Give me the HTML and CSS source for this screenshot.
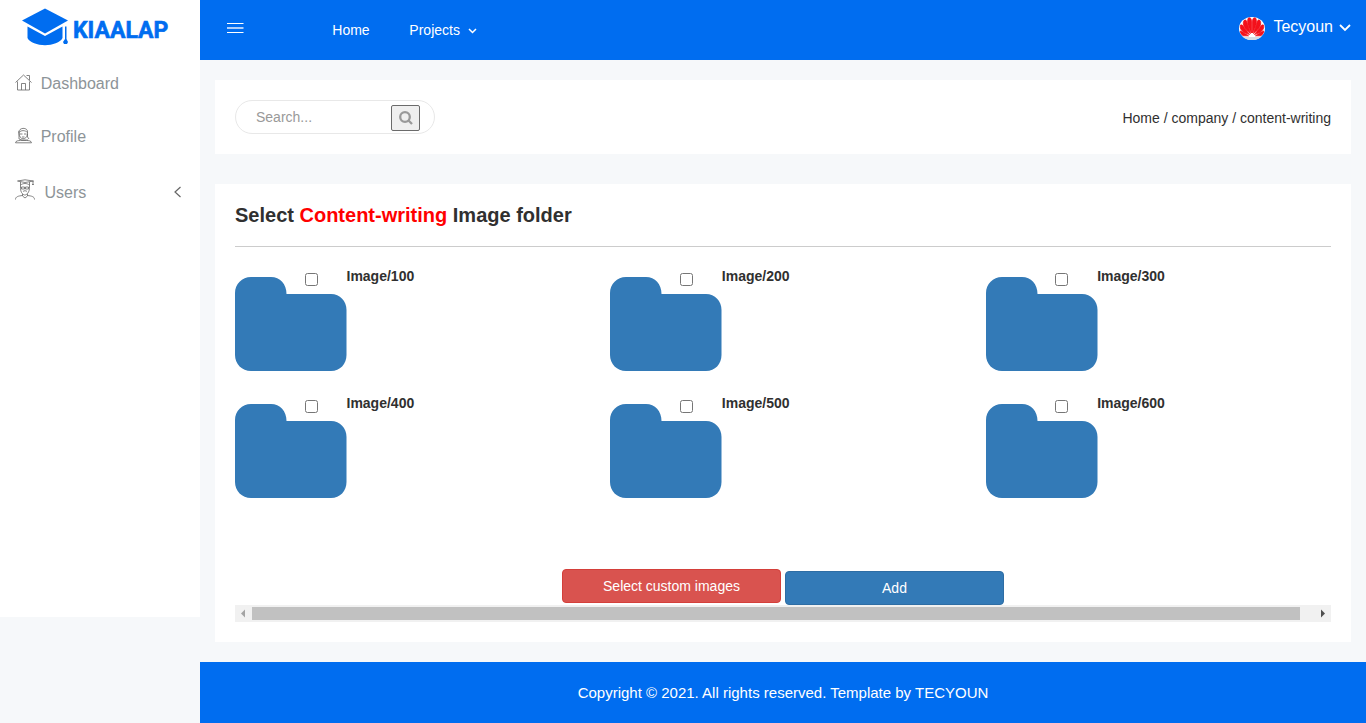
FILE: index.html
```html
<!DOCTYPE html>
<html lang="en">
<head>
<meta charset="utf-8">
<title>Kiaalap</title>
<link rel="stylesheet" href="styles.css">
</head>
<body>
<svg class="defs" width="0" height="0" aria-hidden="true">
  <symbol id="folder" viewBox="0 0 112 94"><path d="M0 16C0 7 7 0 16 0H36C45 0 51.500 7 51.500 17H96C105 17 111.500 24 111.500 33V78C111.500 87 105 94 96 94H16C7 94 0 87 0 78Z"/></symbol>
</svg>
<div class="layout">
  <aside class="sidebar">
    <div class="brand">
      <svg class="brand-icon" width="48" height="38" viewBox="0 0 48 38">
        <path d="M0 12.500 23 .5 46 12.500 23 25.500Z"/>
        <path d="M5.500 18.500 23 28 40.500 18.500V30C36 39.500 10 39.500 5.500 30Z"/>
        <path d="M43 18.500h1.500V31l1.500 3-1 2h-3l-1-2 2-3Z"/>
      </svg>
      <span class="brand-name">KIAALAP</span>
    </div>
    <nav class="menu">
      <a class="item item-home"><svg class="icon" width="17" height="17" viewBox="0 0 17 17"><path d="M.5 8.500 8.500 1l8 7.500M11.500 1.500H14.500V6M2.500 7.500V16H14.500V7.500M6.500 16V9.500H10.500V16"/></svg><span>Dashboard</span></a>
      <a class="item item-profile"><svg class="icon" width="17" height="17" viewBox="0 0 17 17"><path d="M4 6C3 0 13 0 12.500 5v5L14 12M4 6c0 7 7.500 8 8.500 1M4 5.500C6 3 10 3 12.500 5.500M5 7h2.500M9 7h2.500M7 10h2.500M4 4v8l3 1h6M.5 15.800c0-2 3-2.300 5-2.300h6c2 0 5 .3 5 2.300Z"/></svg><span>Profile</span></a>
      <a class="item item-users"><svg class="icon" width="20" height="21" viewBox="0 0 20 21"><path d="M2.500 2 10 .8 18.500 2 10 3.500ZM5.500 3v4C5 15 9 16 10 16s5-2 4.500-9V3M5.500 6c3-2 6-2 9 0M18 2v4M17 5.500h1.800M6.500 8h3v2h-3ZM10.500 8h3v2h-3ZM8 12.500c1-1 3-1 4 0M7.500 15v2L10 19l2.500-2v-2M.5 20.500c0-3 3-3.500 7-4M19.500 20.500c0-3-3-3.500-7-4"/></svg><span>Users</span><svg class="icon collapse" width="9" height="12" viewBox="0 0 9 12"><path d="M7.500 1 2 6l5.500 5"/></svg></a>
    </nav>
  </aside>
  <div class="main">
    <header class="topbar">
      <svg class="burger" width="17" height="11" viewBox="0 0 17 11"><path fill="#fff" d="M0 0h16.500v1H0ZM0 9h16.500v1H0Z"/><path fill="#aecffb" d="M0 4h16.500v2H0Z"/></svg>
      <nav class="top-links">
        <a>Home</a>
        <a>Projects<svg class="caret" width="9" height="6" viewBox="0 0 9 6"><path d="m1 1 3.500 3.500L8 1"/></svg></a>
      </nav>
      <div class="account">
        <svg class="avatar" width="26" height="23" viewBox="0 0 26 23">
          <clipPath id="oval"><ellipse cx="13" cy="11.500" rx="13" ry="11.500"/></clipPath>
          <g clip-path="url(#oval)"><path fill="#fff" d="M0 0h26v23H0z"/><path fill="#d5dce3" d="M3 20h20V23H3z"/>
          <g fill="#f3101b" stroke="#f3101b" stroke-width=".8"><path d="M12.500 16C9 10 7.500 4 9.500 .8Q12.500 0 12.500 5Z"/><path d="M13.500 16C17 10 18.500 4 16.500 .8Q13.500 0 13.500 5Z"/><path d="M11.500 16.500C7 13 2.500 8 5 3.500Q7 1.500 8 5.500Z"/><path d="M14.500 16.500C19 13 23.500 8 21 3.500Q19 1.500 18 5.500Z"/><path d="M10.500 17.500C5 16 0 13 1.500 8Q3 6.500 5.500 11Z"/><path d="M15.500 17.500C21 16 26 13 24.500 8Q23 6.500 20.500 11Z"/><path d="M9.500 18.800H4Q1.500 17 1 14Q3 14 9.500 18.800Z"/><path d="M16.500 18.800H22Q24.500 17 25 14Q23 14 16.500 18.800Z"/></g></g>
        </svg>
        <span>Tecyoun</span>
        <svg class="caret caret-lg" width="12" height="8" viewBox="0 0 12 8"><path d="m1 1 5 5 5-5"/></svg>
      </div>
    </header>
    <main class="content">
      <section class="panel tools">
        <form class="search">
          <input class="search-input" type="text" placeholder="Search...">
          <button class="search-btn" type="button"><svg width="14" height="14" viewBox="0 0 14 14"><circle cx="6" cy="6" r="4.800"/><path d="m9.300 9.300 3.700 3.700"/></svg></button>
        </form>
        <div class="crumbs">Home / company / content-writing</div>
      </section>
      <section class="panel picker">
        <h1 class="title">Select <span class="accent">Content-writing</span> Image folder</h1>
        <div class="folders">
          <label class="folder"><svg class="folder-icon"><use href="#folder"/></svg><input class="check" type="checkbox"><span class="folder-name">Image/100</span></label>
          <label class="folder"><svg class="folder-icon"><use href="#folder"/></svg><input class="check" type="checkbox"><span class="folder-name">Image/200</span></label>
          <label class="folder"><svg class="folder-icon"><use href="#folder"/></svg><input class="check" type="checkbox"><span class="folder-name">Image/300</span></label>
          <label class="folder"><svg class="folder-icon"><use href="#folder"/></svg><input class="check" type="checkbox"><span class="folder-name">Image/400</span></label>
          <label class="folder"><svg class="folder-icon"><use href="#folder"/></svg><input class="check" type="checkbox"><span class="folder-name">Image/500</span></label>
          <label class="folder"><svg class="folder-icon"><use href="#folder"/></svg><input class="check" type="checkbox"><span class="folder-name">Image/600</span></label>
        </div>
        <div class="actions">
          <button class="btn btn-danger" type="button">Select custom images</button>
          <button class="btn btn-primary" type="button">Add</button>
        </div>
        <div class="scrollbar">
          <svg width="17" height="17" viewBox="0 0 17 17"><path fill="#a3a3a3" d="m6 8.500 4-4v8Z"/></svg>
          <div class="track"><div class="thumb"></div></div>
          <svg width="17" height="17" viewBox="0 0 17 17"><path fill="#505050" d="m11 8.500-4-4v8Z"/></svg>
        </div>
      </section>
    </main>
    <footer class="footer">Copyright © 2021. All rights reserved. Template by TECYOUN</footer>
  </div>
</div>
</body>
</html>
```
FILE: styles.css
```css
* { box-sizing: border-box; }
body { margin: 0; background: #f6f8fa; color: #303030; font: 14px/20px "Liberation Sans", Arial, sans-serif; }
.defs { display: block; }
.layout { display: flex; height: 723px; overflow: hidden; }
.sidebar { width: 200px; height: 617px; background: #fff; flex: none; }
.brand { display: flex; height: 60px; padding: 8px 0 0 22px; }
.brand-icon { fill: #006df0; flex: none; }
.brand-name { margin: 10px 0 0 3px; color: #006df0; font: 700 23px/26px Roboto, "Liberation Sans", sans-serif; -webkit-text-stroke: .6px #006df0; }
.menu { display: flex; flex-direction: column; }
.item { display: flex; align-items: center; padding-left: 15px; color: #8d9498; font-size: 16px; line-height: 24px; }
.icon { fill: none; stroke: #666; stroke-width: .8; flex: none; margin-right: 8.700px; }
.item-home { margin-top: 12px; }
.item-home .icon { margin-top: -4px; }
.item-profile { margin-top: 29px; }
.item-profile .icon { margin-top: -4px; }
.item-users { margin-top: 32px; }
.item-users .icon { margin-top: -7px; margin-right: 9.500px; }
.item-users .collapse { margin: -2px 18px 0 auto; stroke-width: 1.2; }
.main { display: flex; flex-direction: column; flex: 1; }
.topbar { display: flex; height: 60px; padding: 0 15px 0 27px; background: #006df0; color: #fff; }
.burger { margin-top: 23px; }
.top-links { display: flex; gap: 39.700px; margin: 20px 0 0 88.300px; }
.caret { margin-left: 8px; fill: none; stroke: #fff; stroke-width: 1.5; vertical-align: 1px; }
.account { display: flex; align-items: flex-start; margin: 17px 0 0 auto; font-size: 16px; }
.account span { margin-left: 8px; }
.caret-lg { margin: 7px 0 0 6px; stroke-width: 1.8; }
.content { display: flex; flex-direction: column; gap: 30px; padding: 20px 15px; }
.panel { background: #fff; }
.tools { display: flex; justify-content: space-between; height: 74px; padding: 20px; }
.search { display: flex; width: 200px; height: 34px; padding: 4px 14px 0 20px; border: 1px solid #e8e8e8; border-radius: 17px; }
.search-input { width: 135px; height: 24px; padding: 0; border: 0; outline: 0; background: none; font: 14px "Liberation Sans", Arial, sans-serif; }
.search-input::placeholder { color: #999; }
.search-btn { display: flex; align-items: center; justify-content: center; width: 29px; height: 26px; padding: 0; border: 1px solid #6b6b6b; border-radius: 2px; background: #efefef; }
.search-btn svg { flex: none; fill: none; stroke: #999; stroke-width: 2.3; }
.crumbs { margin-top: 8px; }
.picker { height: 458px; padding: 20px; }
.title { height: 43px; margin: 0; border-bottom: 1px solid #ccc; font-size: 20px; line-height: 22px; }
.accent { color: #f00; }
.folders { display: grid; grid-template-columns: repeat(3, 375.33px); height: 254px; margin-right: -30px; grid-auto-rows: 127px; padding-top: 19px; }
.folder { display: flex; align-items: flex-start; }
.folder-icon { width: 112px; height: 94px; margin-top: 11px; fill: #337ab7; }
.check { width: 13px; height: 13px; margin: 7px 28.800px 0 -42.300px; }
.folder-name { font-weight: 700; }
.actions { display: flex; justify-content: center; gap: 4px; height: 36px; margin-top: 68px; }
.btn { width: 219px; height: 34px; border: 1px solid; border-radius: 4px; color: #fff; font: 14px/20px "Liberation Sans", Arial, sans-serif; }
.btn-danger { background: #d9534f; border-color: #d43f3a; }
.btn-primary { margin-top: 2px; background: #337ab7; border-color: #2e6da4; }
.scrollbar { display: flex; height: 17px; background: #f1f1f1; }
.track { flex: 1; padding: 2px 14px 2px 0; }
.thumb { height: 13px; background: #c1c1c1; }
.footer { height: 61px; background: #006df0; color: #fff; font-size: 15px; line-height: 61px; text-align: center; }
```
